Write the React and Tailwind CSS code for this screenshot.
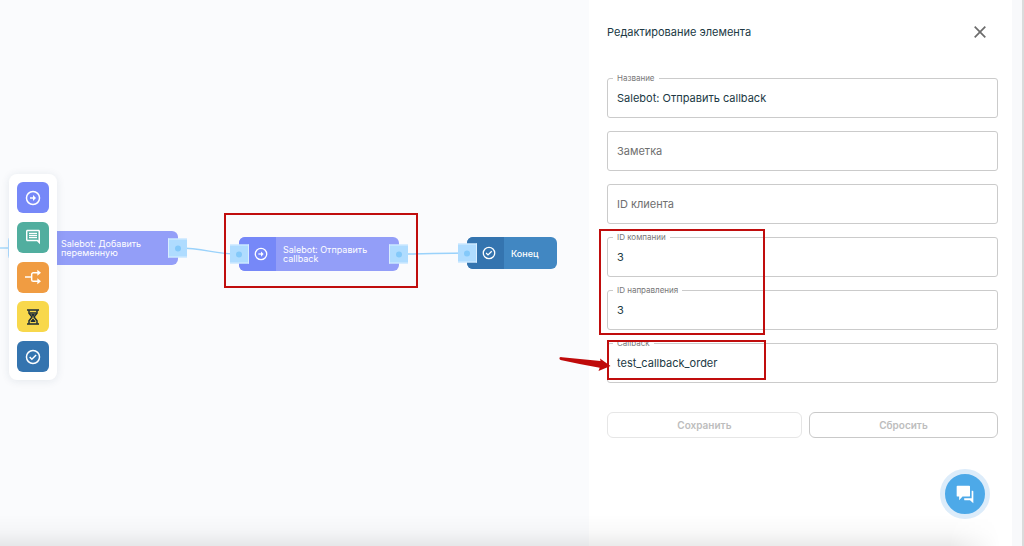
import React, { useState } from 'react'

const ArrowCircleIcon = ({ className }) => (
    <svg className={className} viewBox="0 0 24 24" fill="none" stroke="currentColor" strokeWidth="2.2" aria-hidden="true">
        <circle cx="12" cy="12" r="9.8" />
        <path d="M7.5 12h6" />
        <path d="M12 7.500l4.500 4.500-4.500 4.500z" fill="currentColor" stroke="none" />
    </svg>
)

const CheckCircleIcon = ({ className }) => (
    <svg className={className} viewBox="0 0 24 24" fill="none" stroke="currentColor" strokeWidth="2.2" aria-hidden="true">
        <circle cx="12" cy="12" r="9.8" />
        <path d="M7 12l3.3 3.3 6.4-6.4" />
    </svg>
)

const MessageIcon = ({ className }) => (
    <svg className={className} viewBox="0 0 24 24" fill="currentColor" aria-hidden="true">
        <path d="M22.500 3.500c0-1.300-.9-2.300-2.200-2.300H3.700c-1.300 0-2.200 1-2.200 2.300v12.500c0 1.300.9 2.300 2.200 2.300h14.300l4.500 4.500zM20.200 3.500v13.600l-1.200-1.100H3.700V3.500h16.500zM6 12h12v2H6zm0-3.200h12v2H6zm0-3.200h12v2H6z" />
    </svg>
)

const SplitIcon = ({ className }) => (
    <svg className={className} viewBox="0 0 24 24" fill="none" stroke="currentColor" strokeWidth="2.2" aria-hidden="true">
        <path d="M0 12h10" />
        <path d="M20 5.500h-7.500a2.500 2.500 0 0 0-2.500 2.500v8a2.500 2.500 0 0 0 2.500 2.500H20" />
        <path d="M18.500 1l5.500 4.500-5.500 4.500zM18.500 14l5.500 4.500-5.500 4.500z" fill="currentColor" stroke="none" />
    </svg>
)

const HourglassIcon = ({ className }) => (
    <svg className={className} viewBox="0 0 24 24" fill="none" stroke="currentColor" strokeWidth="2.2" aria-hidden="true">
        <path d="M3 1.500h18M3 22.500h18" />
        <path d="M6 2v4.500L10.500 12 6 17.500V22M18 2v4.500L13.500 12l4.500 5.500V22" />
        <path d="M7 6h10M8.500 18.500h7" />
        <path d="M9 7.500h6L12 12zM12 14l3 4H9z" fill="currentColor" stroke="none" />
    </svg>
)

const ChatIcon = ({ className }) => (
    <svg className={className} viewBox="0 0 24 24" fill="currentColor" aria-hidden="true">
        <path d="M3 2h14a1 1 0 0 1 1 1v11a1 1 0 0 1-1 1H9l-4 4.500V15H3a1 1 0 0 1-1-1V3a1 1 0 0 1 1-1z" />
        <path d="M20 8h1a1 1 0 0 1 1 1v14l-4-3.500h-6a1 1 0 0 1-1-1V17h9z" />
    </svg>
)

const tools = [
    { name: 'Действие', color: 'bg-[#7688f8] text-white', Icon: ArrowCircleIcon },
    { name: 'Сообщение', color: 'bg-[#51ae9f] text-white', Icon: MessageIcon },
    { name: 'Условие', color: 'bg-[#f09c42] text-white', Icon: SplitIcon },
    { name: 'Ожидание', color: 'bg-[#f8d84c] text-[#1c2b36]', Icon: HourglassIcon },
    { name: 'Завершение', color: 'bg-[#3474af] text-white', Icon: CheckCircleIcon },
]

const fields = [
    { id: 'name', label: 'Название' },
    { id: 'note', label: 'Заметка' },
    { id: 'client', label: 'ID клиента' },
    { id: 'company', label: 'ID компании' },
    { id: 'direction', label: 'ID направления' },
    { id: 'callback', label: 'Callback' },
]

const Port = ({ className }) => (
    <span className={`absolute top-1/2 flex size-[19px] -translate-y-1/2 items-center justify-center border-y border-[#d8edff] bg-[#afdcff] ${className}`}>
        <span className="size-1.5 rounded-full bg-[#84c9fa]" />
    </span>
)

const Node = ({ title, Icon, position, iconColor, color, hasOutput = true }) => (
    <div className={`absolute flex rounded-md text-[9px] leading-[9px] text-white ${position} ${color}`}>
        <div className={`flex w-[37px] shrink-0 items-center justify-center rounded-l-md pl-1.5 ${iconColor}`}>
            <Icon className="size-3.5" />
        </div>
        <div className="flex flex-1 items-center pl-[7px] pr-4">{title}</div>
        <Port className="-left-[9px] border-r" />
        {hasOutput && <Port className="-right-[9px] border-l" />}
    </div>
)

const Toolbar = () => (
    <div className="absolute left-[9px] top-[174px] flex h-[206px] flex-col justify-between rounded-lg bg-white p-2 shadow-[0_1px_8px_rgba(30,60,90,0.1)]">
        {tools.map(({ name, color, Icon }) => (
            <button
                key={name}
                type="button"
                aria-label={name}
                className={`flex h-[31px] w-8 items-center justify-center rounded-md ${color}`}
            >
                <Icon className="size-4" />
            </button>
        ))}
    </div>
)

const Canvas = () => (
    <main className="relative min-w-0 flex-1 overflow-hidden bg-[#fafbfd]">
        <svg className="absolute left-0 top-0 h-full w-full" fill="none" stroke="#9ad2fb" strokeWidth="1.3" aria-hidden="true">
            <path d="M0 248H18" />
            <path d="M178 248C206 248 212 254 239 254" />
            <path d="M399 254C422 254 444 253 467 253" />
        </svg>
        <Node
            title="Salebot: Добавить переменную"
            Icon={ArrowCircleIcon}
            position="left-[17px] top-[231px] h-[34px] w-[161px]"
            iconColor="bg-[#7688f8]"
            color="bg-[#939ef8]"
        />
        <Node
            title="Salebot: Отправить callback"
            Icon={ArrowCircleIcon}
            position="left-[239px] top-[237px] h-[34px] w-[160px]"
            iconColor="bg-[#7688f8]"
            color="bg-[#939ef8]"
        />
        <Node
            title="Конец"
            Icon={CheckCircleIcon}
            position="left-[467px] top-[237px] h-8 w-[90px] font-medium"
            iconColor="bg-[#3474af]"
            color="bg-[#4187c2]"
            hasOutput={false}
        />
        <Toolbar />
        <div className="absolute left-[224px] top-[213px] h-[75px] w-[194px] border-2 border-[#c00d0d]" />
    </main>
)

const Field = ({ id, label, value, onChange }) => (
    <div className="relative">
        <input
            id={id}
            type="text"
            value={value}
            onChange={(e) => onChange(id, e.target.value)}
            className="block h-10 w-full rounded-[3px] border border-[#cbcbcb] bg-white px-[9px] text-[11px] text-[#203944] focus:border-blue-400 focus:outline-none"
        />
        <label
            htmlFor={id}
            className={
                value
                    ? 'absolute -top-1.5 left-1.5 bg-white px-1 text-[8px] leading-3 text-[#777]'
                    : 'absolute left-2.5 top-3 text-[11px] leading-4 text-[#6f6f6f]'
            }
        >
            {label}
        </label>
    </div>
)

const EditPanel = () => {
    const [values, setValues] = useState({
        name: 'Salebot: Отправить callback',
        note: '',
        client: '',
        company: '3',
        direction: '3',
        callback: 'test_callback_order',
    })

    const changeHandler = (id, value) => {
        setValues({ ...values, [id]: value })
    }

    return (
        <aside className="relative w-[423px] shrink-0 bg-white pb-6 pl-[18px] pr-3.5 pt-5">
            <div className="flex items-center justify-between">
                <h2 className="text-[11px] text-[#203944]">Редактирование элемента</h2>
                <button type="button" aria-label="Закрыть" className="mr-1.5 flex size-6 items-center justify-center text-[#6c6c6c]">
                    <svg className="size-3" viewBox="0 0 12 12" stroke="currentColor" strokeWidth="1.7" aria-hidden="true">
                        <path d="M0.700 0.700l10.600 10.600M11.300 0.700L0.700 11.300" />
                    </svg>
                </button>
            </div>

            <form className="mt-[34px]" onSubmit={(e) => e.preventDefault()}>
                <div className="flex flex-col gap-[13px]">
                    {fields.map((field) => (
                        <Field
                            key={field.id}
                            id={field.id}
                            label={field.label}
                            value={values[field.id]}
                            onChange={changeHandler}
                        />
                    ))}
                </div>
                <div className="mt-[29px] flex gap-[7px] text-[10px] font-semibold text-[#bdbdbd]">
                    <button type="submit" className="h-[26px] flex-auto rounded-md border border-[#e6e6e6]">
                        Сохранить
                    </button>
                    <button type="button" className="h-[26px] flex-auto rounded-md border border-[#c9c9c9]">
                        Сбросить
                    </button>
                </div>
            </form>

            {/* callouts over the form */}
            <div className="pointer-events-none absolute left-2.5 top-[229px] h-[106px] w-[166px] border-2 border-[#c00d0d]" />
            <div className="pointer-events-none absolute left-[18px] top-[340px] h-10 w-[159px] border-2 border-[#c00d0d]" />
            <svg className="pointer-events-none absolute -left-[30px] top-[355px] h-4 w-[52px]" viewBox="0 0 52 16" fill="#bf0a0a" aria-hidden="true">
                <path d="M0.500 2.800Q1 1.800 3 2.200L41.500 6l-.5-2.500L51.500 11 39.500 16l1.200-3.200Q22 9.500 1.500 5Q0 4 .5 2.800z" />
            </svg>
        </aside>
    )
}

export default function App() {
    return (
        <div className="relative flex min-h-screen bg-white font-['Inter',sans-serif]">
            <Canvas />
            <EditPanel />
            <div className="w-3 shrink-0 border-r-2 border-[#dadcdc] bg-[#f8f9fb]" />
            <div className="pointer-events-none absolute bottom-0 left-0 right-6 h-8 bg-linear-to-b from-transparent via-black/2 to-black/8 mask-r-from-95%" />
            <button
                type="button"
                aria-label="Открыть чат"
                className="absolute bottom-[27px] right-[34px] flex size-[50px] items-center justify-center rounded-full border-5 border-[#dcecfa] bg-[#4da9e8] text-white"
            >
                <ChatIcon className="size-5" />
            </button>
        </div>
    )
}
